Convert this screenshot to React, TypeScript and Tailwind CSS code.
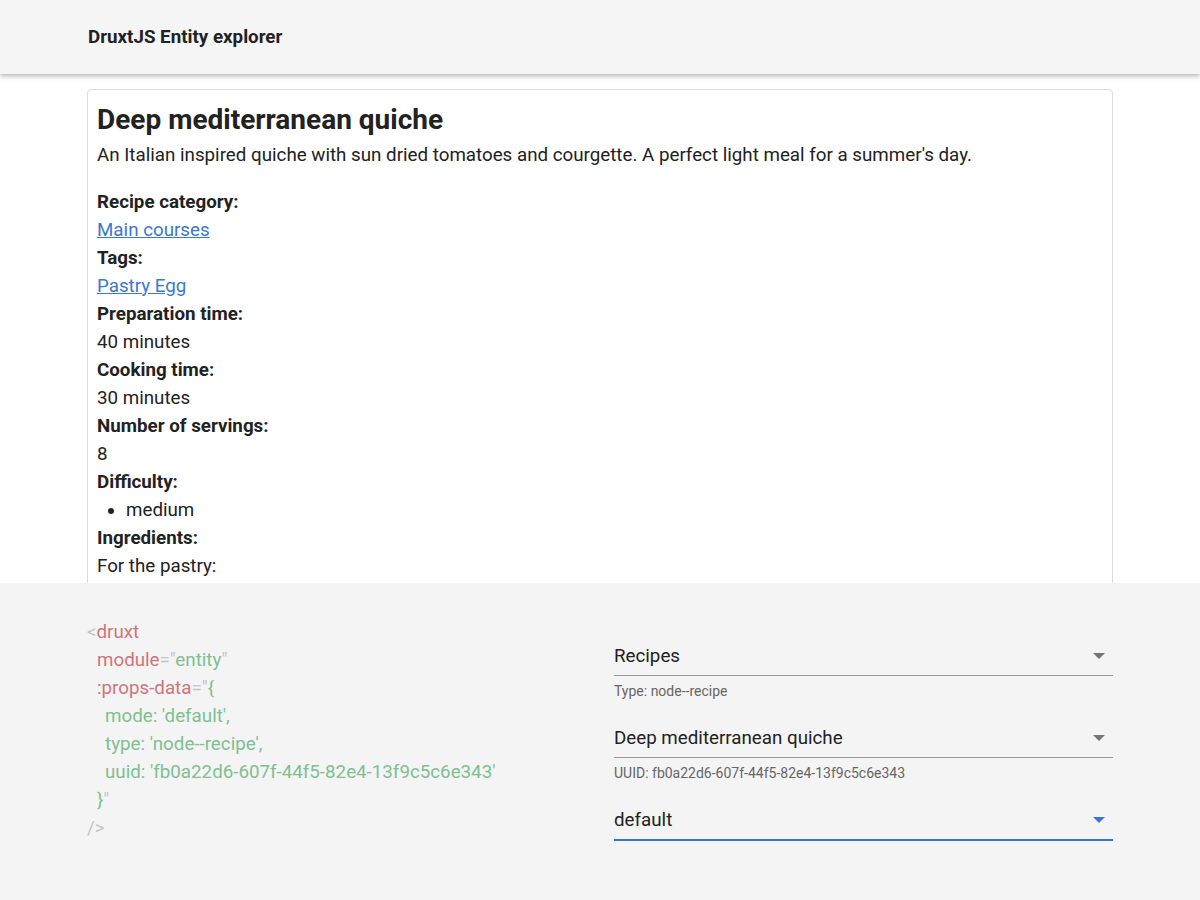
const font = { fontFamily: 'Roboto, "Liberation Sans", sans-serif' };

function Field({ label, children }: { label: string; children: React.ReactNode }) {
  return (
    <>
      <div className="font-bold">{label}</div>
      <div>{children}</div>
    </>
  );
}

function Select({ value, hint, active }: { value: string; hint?: string; active?: boolean }) {
  return (
    <div className="mb-[24px]">
      <div
        className={
          'flex items-center justify-between pb-[5px] ' +
          (active ? 'border-b-2 border-[#3a78cf]' : 'border-b border-[#9a9a9a]')
        }
      >
        <span className="text-[18.75px] leading-[28px] text-[#222]">{value}</span>
        <svg width="12" height="6" viewBox="0 0 12 6" className="mr-[8px]">
          <path d="M0 0 L12 0 L6 6 Z" fill={active ? '#3a78cf' : '#757575'} />
        </svg>
      </div>
      {hint && <div className="text-[14px] text-[#666] mt-[6px] leading-[18px]">{hint}</div>}
    </div>
  );
}

export default function App() {
  const red = 'text-[#d0747b]';
  const green = 'text-[#7fbf93]';
  const gray = 'text-[#c4c4c4]';
  return (
    <div className="h-[900px] flex flex-col bg-white overflow-hidden" style={font}>
      <header className="h-[74px] shrink-0 bg-[#f5f5f5] shadow-[0_2px_5px_rgba(0,0,0,0.3)] z-10 relative">
        <div className="w-[1024px] mx-auto h-full flex items-center">
          <h1 className="text-[18.75px] font-bold text-[#222]">DruxtJS Entity explorer</h1>
        </div>
      </header>

      <main className="h-[509px] shrink-0 overflow-hidden">
        <div className="w-[1026px] mx-auto mt-[15px] border border-[#dcdcdc] rounded-[4px] px-[9px] pt-[11px] pb-4 text-[18.75px] leading-[28px] text-[#222]">
          <h2 className="text-[28px] font-bold leading-[38px]">Deep mediterranean quiche</h2>
          <p className="mt-[2px] mb-[19px]">
            An Italian inspired quiche with sun dried tomatoes and courgette. A perfect light meal for a summer's day.
          </p>
          <Field label="Recipe category:">
            <a href="#" className="text-[#3a78cf] underline">Main courses</a>
          </Field>
          <Field label="Tags:">
            <a href="#" className="text-[#3a78cf] underline">Pastry Egg</a>
          </Field>
          <Field label="Preparation time:">40 minutes</Field>
          <Field label="Cooking time:">30 minutes</Field>
          <Field label="Number of servings:">8</Field>
          <div className="font-bold">Difficulty:</div>
          <ul className="list-disc pl-[29px]">
            <li>medium</li>
          </ul>
          <div className="font-bold">Ingredients:</div>
          <div>For the pastry:</div>
        </div>
      </main>

      <section className="flex-1 bg-[#f4f4f4]">
        <div className="w-[1026px] mx-auto flex pt-[35px]">
          <div className="w-[527px] text-[18.75px] leading-[28px]">
            <div><span className={gray}>&lt;</span><span className={red}>druxt</span></div>
            <div className="pl-[10px]">
              <span className={red}>module</span><span className={gray}>="</span><span className={green}>entity</span><span className={gray}>"</span>
            </div>
            <div className="pl-[10px]">
              <span className={red}>:props-data</span><span className={gray}>="</span><span className={green}>{'{'}</span>
            </div>
            <div className={'pl-[18px] ' + green}>mode: 'default',</div>
            <div className={'pl-[18px] ' + green}>type: 'node--recipe',</div>
            <div className={'pl-[18px] ' + green}>uuid: 'fb0a22d6-607f-44f5-82e4-13f9c5c6e343'</div>
            <div className="pl-[10px]">
              <span className={green}>{'}'}</span><span className={gray}>"</span>
            </div>
            <div className={gray}>/&gt;</div>
          </div>
          <div className="w-[499px] pt-[24px]">
            <Select value="Recipes" hint="Type: node--recipe" />
            <Select value="Deep mediterranean quiche" hint="UUID: fb0a22d6-607f-44f5-82e4-13f9c5c6e343" />
            <Select value="default" active />
          </div>
        </div>
      </section>
    </div>
  );
}
